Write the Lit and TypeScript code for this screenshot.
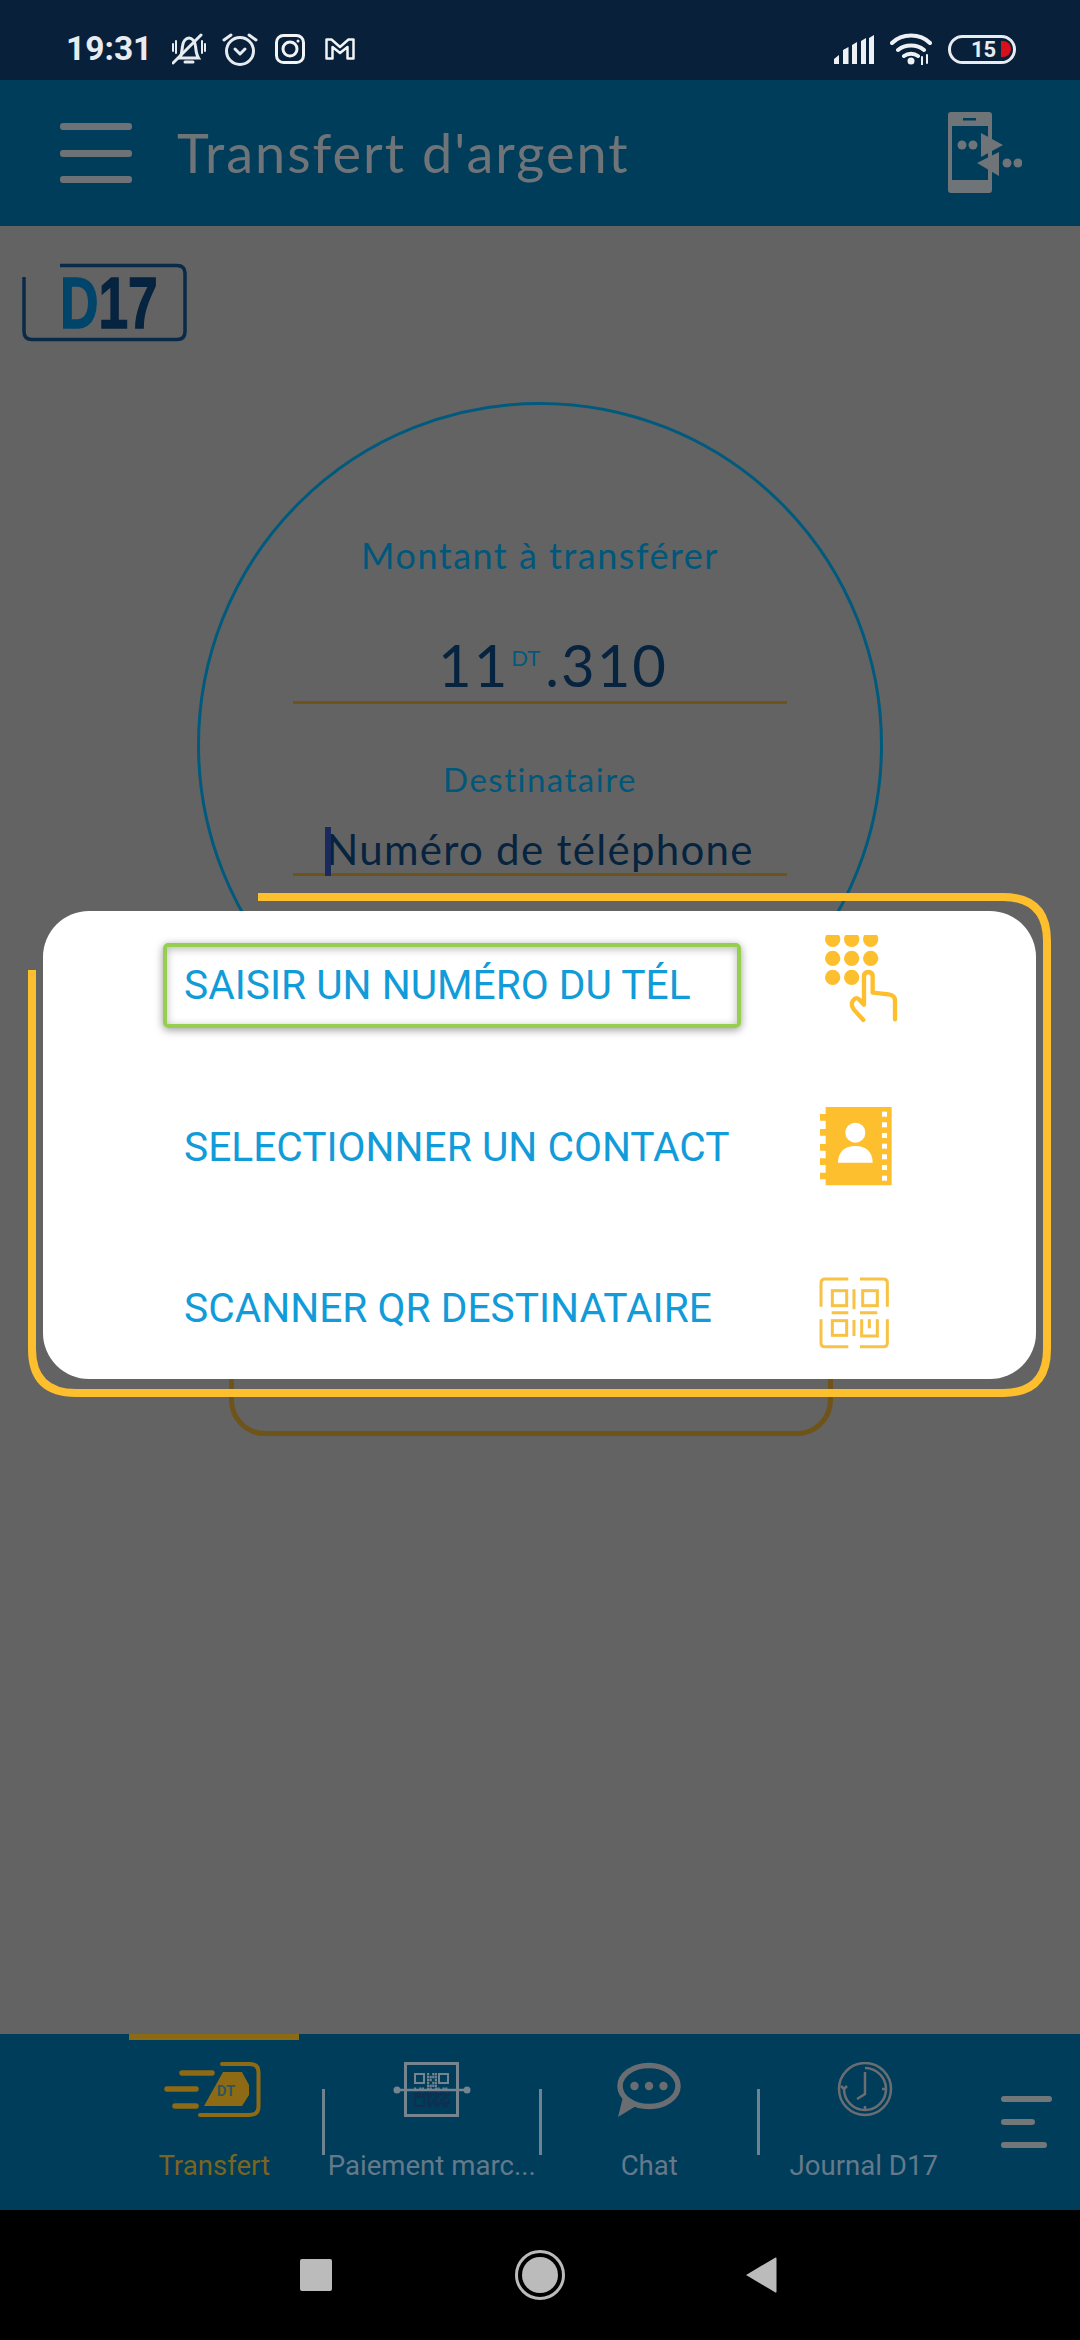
import { LitElement, html, css, svg } from "lit";
import { customElement } from "lit/decorators.js";

function qrTiny() {
  const cells = [];
  for (let r = 0; r < 12; r++) {
    for (let c = 0; c < 14; c++) {
      const x = 37 + c * 2.6;
      const y = 11 + r * 2.9;
      const inFinder = (x < 49 && y < 23) || (x > 60 && y < 23) || (x < 49 && y > 33);
      if (inFinder || (r * 7 + c * 11 + r * c) % 3 === 0) continue;
      const fill = y < 27 ? "#6f8290" : "#0f2f50";
      cells.push(svg`<rect x=${x} y=${y} width="2.200" height="2.400" fill=${fill}/>`);
    }
  }
  return cells;
}

@customElement("app-root")
export class AppRoot extends LitElement {
  static styles = css`
    :host { display: block; width: 1080px; height: 2340px; }
    .page { position: relative; width: 1080px; height: 2340px; display: flex; flex-direction: column; background: #636363; overflow: hidden; font-family: "Lato", "Noto Sans", sans-serif; }
    svg { display: block; flex: none; }

    .status { height: 80px; box-sizing: border-box; flex: none; background: #08203a; padding: 18px 64px 0 66px; display: flex; align-items: center; }
    .time { font: 700 33.5px/62px "Roboto", sans-serif; color: #e8ecf0; width: 85px; margin-right: 21px; white-space: nowrap; }
    .status-left { display: flex; align-items: center; }
    .status-right { display: flex; align-items: center; margin-left: auto; }
    .gap-bell { margin-right: 16px; } .gap-alarm { margin-right: 17px; } .gap-ig { margin-right: 20px; }
    .gap-sig { margin-right: 16px; } .gap-wifi { margin-right: 16px; }
    .battery { position: relative; width: 68px; height: 29px; box-sizing: border-box; border: 3px solid #e8ecf0; border-radius: 15px; display: flex; align-items: center; }
    .battery span { font: 700 22px/23px "Roboto", sans-serif; color: #e8ecf0; margin-left: 20px; width: 30px; }
    .battery i { width: 10px; height: 16px; background: #d8101c; border-radius: 0 8px 8px 0; }

    .appbar { height: 146px; flex: none; background: #003d5a; display: flex; align-items: center; padding: 0 58px 0 60px; }
    .burger { width: 72px; display: flex; flex-direction: column; gap: 19.5px; margin-right: 45px; }
    .burger i { display: block; height: 7px; background: #6c7276; border-radius: 3px; }
    .title { font-size: 54px; line-height: 60px; color: #6f7478; letter-spacing: 2px; white-space: nowrap; }
    .appbar svg { margin-left: auto; }

    main { flex: 1; display: flex; flex-direction: column; min-height: 0; }
    .logo { position: relative; width: 168px; height: 80px; margin: 36px 0 0 21px; flex: none; }
    .logo svg { position: absolute; inset: 0; }
    .logo-text { position: absolute; left: 39px; top: 2px; display: flex; font: 700 73px/78px "Liberation Sans", sans-serif; transform: scaleX(.73); transform-origin: left center; white-space: nowrap; }
    .logo-d { color: #02456a; -webkit-text-stroke: 1.5px #02456a; }
    .logo-n { color: #06233f; -webkit-text-stroke: 1.5px #06233f; }
    .circle { width: 686px; height: 686px; box-sizing: border-box; margin: 60px 0 0 197px; border: 3px solid #005a7d; border-radius: 50%; display: flex; flex-direction: column; align-items: center; padding-top: 128px; }
    .lab { color: #00577a; font-size: 36px; line-height: 44px; letter-spacing: 1.5px; white-space: nowrap; }
    .amount { width: 468px; height: 66px; margin-top: 54px; border-bottom: 3px solid #6e5418; display: flex; justify-content: center; align-items: flex-end; color: #06233f; font-size: 58px; line-height: 64px; letter-spacing: 2px; padding: 0 0 4px 26px; box-sizing: content-box; }
    .amount sup { font-size: 22px; line-height: 22px; color: #005a7d; letter-spacing: 0; align-self: flex-start; margin: 16px 5px 0 2px; }
    .dest { margin-top: 55px; font-size: 33px; line-height: 40px; }
    .phone { position: relative; width: 494px; height: 46px; margin-top: 28px; border-bottom: 3px solid #6e5418; color: #06233f; font-size: 42px; line-height: 44px; letter-spacing: 1.3px; text-align: center; white-space: nowrap; }
    .caret { position: absolute; left: 32px; top: 0; width: 6px; height: 49px; background: #1a2a5c; }
    .ghost { width: 604px; height: 110px; box-sizing: border-box; margin: 238px 0 0 229px; border: 5px solid #6e5418; border-radius: 36px; }

    .nav { height: 176px; flex: none; background: #003d5a; display: flex; padding-left: 107px; }
    .tab { position: relative; width: 214.5px; flex: none; display: flex; flex-direction: column; align-items: center; padding-top: 28px; box-sizing: border-box; }
    .tab:nth-of-type(7) { padding-right: 6px; }
    .tab label { margin-top: 31px; font: 400 27.6px/34px "Roboto", sans-serif; color: #64798a; white-space: nowrap; }
    .tab.on label { color: #7a6520; }
    .tab.on::before { content: ""; position: absolute; top: 0; left: 22px; width: 170px; height: 6px; background: #8a6a14; }
    .divider { width: 3px; height: 66px; margin-top: 55px; background: #6f8290; flex: none; }
    .more { margin: 62px 0 0 27px; width: 51px; display: flex; flex-direction: column; gap: 17px; }
    .more i { display: block; height: 6px; background: #72777a; border-radius: 3px; }
    .more i:nth-child(2) { width: 34px; } .more i:nth-child(3) { width: 46px; }

    .sys { height: 130px; flex: none; background: #000; display: flex; align-items: center; padding-left: 300px; }
    .square { width: 32px; height: 32px; background: #bbb; border-radius: 2px; margin-right: 183px; }
    .home { margin-right: 180px; }

    .dialog { position: absolute; left: 28px; top: 893px; width: 1023px; height: 504px; }
    .ring { position: absolute; inset: 0; pointer-events: none; }
    .card { position: absolute; left: 15px; top: 18px; width: 993px; height: 468px; background: #fff; border-radius: 46px; box-sizing: border-box; padding: 24px 0 0 120px; display: flex; flex-direction: column; gap: 61.5px; }
    .row { display: flex; align-items: center; height: 100px; gap: 59px; }
    .opt { width: 578px; height: 85px; box-sizing: border-box; border: 4px solid transparent; padding-left: 17px; display: flex; align-items: center; font: 400 40.7px/48px "Roboto", sans-serif; color: #129bd9; white-space: nowrap; border-radius: 5px; }
    .opt.focus { border-color: #96cf50; box-shadow: 0 2px 8px rgba(0,0,0,.4), inset 0 2px 8px rgba(0,0,0,.28); }
  `;

  render() {
    return html`<div class="page">
      <div class="status">
        <div class="status-left">
          <span class="time">19:31</span>
          <svg class="gap-bell" width="34" height="32" viewBox="0 0 34 32" fill="none" stroke="#e8ecf0" stroke-width="3" stroke-linecap="round"><path d="M8 25c2-4 2-8 2.500-12C11 8 14 5 17 5s6 3 6.500 8c.5 4 .5 8 3 12z"/><path d="M13 29h8"/><path d="M1 11v7M4 8v12M33 11v7M30 8v12" stroke-width="2"/><path d="M1 30 29 2" stroke-width="3"/></svg>
          <svg class="gap-alarm" width="36" height="34" viewBox="0 0 36 34" fill="none" stroke="#e8ecf0" stroke-width="3" stroke-linecap="round" stroke-linejoin="round"><circle cx="18" cy="19" r="13.500"/><path d="M13 17l5 5 5-5"/><path d="M2 8l7-5M34 8l-7-5"/></svg>
          <svg class="gap-ig" width="30" height="30" viewBox="0 0 30 30" fill="none" stroke="#f2f4f6" stroke-width="3"><rect x="1.500" y="1.500" width="27" height="27" rx="7"/><circle cx="15" cy="15" r="7"/><circle cx="23" cy="7" r="1.500" fill="#f2f4f6" stroke="none"/></svg>
          <svg width="30" height="22" viewBox="0 0 30 22" fill="none" stroke="#f2f4f6" stroke-width="2.500" stroke-linejoin="round"><path d="M1.500 1.500h5L15 9l8.500-7.500h5v19h-6V9L15 15 7.500 9v11.500h-6z"/></svg>
        </div>
        <div class="status-right">
          <svg class="gap-sig" width="40" height="29" viewBox="0 0 40 29" fill="#eef1f4"><path d="M0 29v-5l5-4v9zM9 29V15l5.500-3v17zM18 29V10l5-3v22zM27 29V6l5-3v26zM35 29V3l5-3v29z"/></svg>
          <svg class="gap-wifi" width="42" height="32" viewBox="0 0 42 32" fill="none" stroke="#eef1f4" stroke-width="4" stroke-linecap="round"><path d="M2 10C12 0 30 0 40 10M8 17c7-6 19-6 26 0M14 23c4-3 10-3 14 0"/><circle cx="21" cy="28" r="3.500" fill="#eef1f4" stroke="none"/><path d="M32 24v8M37 22v8" stroke-width="2"/></svg>
          <div class="battery"><span>15</span><i></i></div>
        </div>
      </div>

      <div class="appbar">
        <div class="burger"><i></i><i></i><i></i></div>
        <div class="title">Transfert d'argent</div>
        <svg width="76" height="84" viewBox="945 111 76 84" fill="#6e7478"><path fill-rule="evenodd" d="M950 112h38a3 3 0 0 1 3 3v75a3 3 0 0 1-3 3h-38a3 3 0 0 1-3-3v-75a3 3 0 0 1 3-3zM951 126v54h36v-54z"/><rect x="962" y="118" width="13" height="2.500" fill="#003d5a"/><circle cx="961" cy="145" r="4.500"/><circle cx="972" cy="145" r="4.500"/><path d="M980 133v24l22-12zM998 152v24l-22-13z"/><circle cx="1006" cy="163" r="4.500"/><circle cx="1017" cy="163" r="4.500"/></svg>
      </div>

      <main>
        <div class="logo">
          <svg width="168" height="80" viewBox="21 262 168 80"><path d="M60 265.500h117q8 0 8 8v58q0 8-8 8H32q-8 0-8-8V277" fill="none" stroke="#0a2a4a" stroke-width="3.500"/></svg>
          <div class="logo-text"><span class="logo-d">D</span><span class="logo-n">17</span></div>
        </div>
        <div class="circle">
          <div class="lab">Montant à transférer</div>
          <div class="amount">11<sup>DT</sup>.310</div>
          <div class="lab dest">Destinataire</div>
          <div class="phone"><span class="caret"></span>Numéro de téléphone</div>
        </div>
        <div class="ghost"></div>
      </main>

      <div class="nav">
        <div class="tab on">
          <svg width="110" height="56" viewBox="0 0 110 56"><g fill="none" stroke="#8f6a14" stroke-linecap="round"><path d="M23 11h30M8 27h29M16 44h21" stroke-width="5.500"/><path d="M63 2h27q9.500 0 9.500 8v35q0 8-9.500 8H41" stroke-width="4"/></g><path d="M64 10h19l7 13v10l-7 11H45z" fill="#8f6a14"/><text x="67" y="34" text-anchor="middle" font-family="Roboto" font-weight="700" font-size="15" fill="#2f5560">DT</text></svg>
          <label>Transfert</label>
        </div>
        <div class="divider"></div>
        <div class="tab">
          <svg width="110" height="56" viewBox="0 0 110 56"><rect x="28.500" y="1.500" width="52" height="52" fill="none" stroke="#75848e" stroke-width="3"/><g fill="none" stroke="#75848e" stroke-width="2"><rect x="38" y="12" width="9" height="9"/><rect x="62" y="12" width="9" height="9"/></g><rect x="38" y="35" width="9" height="9" fill="none" stroke="#0f2f50" stroke-width="2"/>${qrTiny()}<path d="M20 28h70" stroke="#75848e" stroke-width="2.500"/><circle cx="20" cy="28" r="3.500" fill="#75848e"/><circle cx="90" cy="28" r="3.500" fill="#75848e"/></svg>
          <label>Paiement marc...</label>
        </div>
        <div class="divider"></div>
        <div class="tab">
          <svg width="110" height="56" viewBox="0 0 110 56"><ellipse cx="55" cy="24" rx="29" ry="20.500" fill="none" stroke="#6a6e72" stroke-width="5.500"/><path d="M24 55l5-20 13 9z" fill="#6a6e72"/><circle cx="40.500" cy="24" r="4.200" fill="#6a6e72"/><circle cx="55" cy="24" r="4.200" fill="#6a6e72"/><circle cx="69.500" cy="24" r="4.200" fill="#6a6e72"/></svg>
          <label>Chat</label>
        </div>
        <div class="divider"></div>
        <div class="tab">
          <svg width="110" height="56" viewBox="0 0 110 56" fill="none" stroke="#6a6e72" stroke-width="2.500"><circle cx="56" cy="27" r="26"/><path d="M56 6a21 21 0 1 1-21 21" /><path d="M35 27l-3-3M35 27l3-3M56 10v22l-8 5M73 27h4M56 44v4" /></svg>
          <label>Journal D17</label>
        </div>
        <div class="more"><i></i><i></i><i></i></div>
      </div>

      <div class="sys">
        <div class="square"></div>
        <svg class="home" width="50" height="50" viewBox="0 0 50 50"><circle cx="25" cy="25" r="23.500" fill="none" stroke="#bbb" stroke-width="3"/><circle cx="25" cy="25" r="18" fill="#bbb"/></svg>
        <svg width="32" height="38" viewBox="0 0 32 38"><path d="M1 19 30.500 1.500q1-.5 1 1v33q0 1.500-1 1z" fill="#bbb"/></svg>
      </div>

      <div class="dialog">
        <div class="card">
          <div class="row">
            <div class="opt focus">SAISIR UN NUMÉRO DU TÉL</div>
            <svg width="120" height="100" viewBox="60 75 360 300"><g fill="#fdbf2d"><circle cx="158" cy="88" r="23"/><circle cx="215" cy="88" r="23"/><circle cx="272" cy="88" r="23"/><circle cx="158" cy="145" r="23"/><circle cx="215" cy="145" r="23"/><circle cx="272" cy="145" r="23"/><circle cx="158" cy="202" r="23"/><circle cx="215" cy="202" r="23"/></g><path d="M250 330 221 298q-10-14-2-26 9-14 20-2l13 14V200q0-14 13-14t13 14v48l48 5q19 2 19 20v55" fill="none" stroke="#fdbf2d" stroke-width="13" stroke-linecap="round" stroke-linejoin="round"/></svg>
          </div>
          <div class="row">
            <div class="opt">SELECTIONNER UN CONTACT</div>
            <svg width="120" height="100" viewBox="60 558 360 300"><path fill="#fdbf2d" d="M137 588h198v235H137v-18h-17v-20h17v-23h-17v-20h17v-23h-17v-20h17v-25h-17v-20h17v-25h-17v-20h17z"/><g fill="#fff"><circle cx="226" cy="665" r="30"/><path d="M174 755c0-34 22-50 52-50s52 16 52 50z"/><rect x="306" y="602" width="15" height="15"/><rect x="306" y="634" width="15" height="15"/><rect x="306" y="666" width="15" height="15"/><rect x="306" y="698" width="15" height="15"/><rect x="306" y="730" width="15" height="15"/><rect x="306" y="762" width="15" height="15"/><rect x="306" y="794" width="15" height="15"/></g></svg>
          </div>
          <div class="row">
            <div class="opt">SCANNER QR DESTINATAIRE</div>
            <svg width="120" height="100" viewBox="60 1044 360 300" fill="none" stroke="#f8c244" stroke-width="9"><path d="M205 1107H135q-12 0-12 12v71M240 1107h70q12 0 12 12v71M123 1228v70q0 12 12 12h70M322 1228v70q0 12-12 12h-70"/><rect x="157" y="1142" width="43" height="45"/><rect x="248" y="1142" width="44" height="45"/><path d="M222 1138v60M155 1208h50M240 1208h52"/><rect x="157" y="1232" width="43" height="44"/><path d="M222 1230v48M245 1228v50h47v-50M268 1228v27"/></svg>
          </div>
        </div>
        <svg class="ring" width="1023" height="504" viewBox="0 0 1023 504"><path d="M230 4H975q44 0 44 44V456q0 44-44 44H48q-44 0-44-44V77" fill="none" stroke="#fdbf2d" stroke-width="8"/></svg>
      </div>
    </div>`;
  }
}
